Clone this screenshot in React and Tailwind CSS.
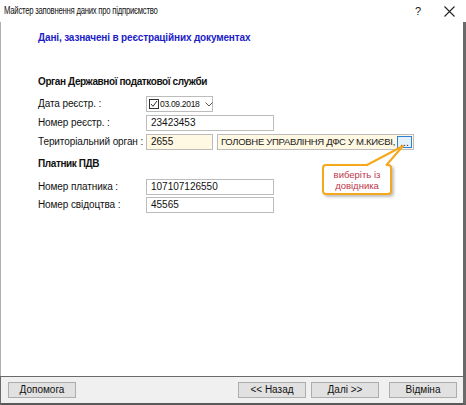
import React from "react";

const F = { fontFamily: '"Liberation Sans", "DejaVu Sans", sans-serif' };

function Row({ label, children }) {
  return (
    <div className="flex items-center h-[16px]">
      <div className="w-[108px] shrink-0 whitespace-nowrap text-[10px] tracking-[-0.1px] text-[#111] leading-none">{label}</div>
      {children}
    </div>
  );
}

function Box({ w, value, bg = "bg-white" }) {
  return (
    <div className={`h-[16px] ${w} ${bg} shrink-0 border border-[#bcbcbc] flex items-center pl-[4px] text-[10px] text-[#111] leading-none`}>
      {value}
    </div>
  );
}

function Btn({ children }) {
  return (
    <div className="w-[68px] h-[16px] shrink-0 bg-[#e1e1e1] border border-[#adadad] flex items-center justify-center text-[10px] text-[#111] leading-none">
      {children}
    </div>
  );
}

export default function App() {
  return (
    <div className="relative w-[466px] h-[405px] bg-white overflow-hidden" style={F}>
      {/* title bar */}
      <div className="h-[22px] flex items-center pl-[4px] pr-[8px] text-[10px] text-[#111] leading-none">
        <div className="flex-1 min-w-0">
          <span className="inline-block whitespace-nowrap tracking-[-0.3px] scale-x-[0.77] origin-left">Майстер заповнення даних про підприємство</span>
        </div>
        <span className="w-[30px] text-center text-[11px] mr-[11px]">?</span>
        <svg width="11" height="11" viewBox="0 0 11 11" className="mr-[3px]">
          <path d="M0.5 0.5 L10.5 10.5 M10.5 0.5 L0.5 10.5" stroke="#222" strokeWidth="1.1" />
        </svg>
      </div>
      {/* body */}
      <div className="h-[354px] border-l border-l-[#b0b0b0] border-r-[3px] border-r-[#6a6a6a] pl-[37px] pt-[10px]">
        <div className="text-[10px] font-bold text-[#1c1cc8] tracking-[-0.15px] leading-none h-[12px] flex items-center whitespace-nowrap">
          Дані, зазначені в реєстраційних документах
        </div>
        <div className="mt-[32px] text-[10px] font-bold text-[#111] tracking-[-0.4px] leading-none h-[12px] flex items-center whitespace-nowrap">
          Орган Державної податкової служби
        </div>
        <div className="mt-[8px] flex flex-col gap-[3px]">
          <Row label="Дата реєстр. :">
            <div className="h-[16px] w-[67px] shrink-0 border border-[#bcbcbc] bg-white flex items-center pl-[2px] text-[8.5px] tracking-[-0.3px] text-[#111] leading-none">
              <svg width="10" height="10" viewBox="0 0 10 10" className="shrink-0 mr-[1px]">
                <rect x="0.5" y="0.5" width="9" height="9" fill="white" stroke="#333" />
                <path d="M2 5 L4 7.3 L8 2" fill="none" stroke="#333" strokeWidth="1" />
              </svg>
              <span className="whitespace-nowrap">03.09.2018</span>
              <svg width="8" height="5" viewBox="0 0 8 5" className="shrink-0 ml-[5px]">
                <path d="M0.5 0.5 L4 4 L7.5 0.5" fill="none" stroke="#555" strokeWidth="1" />
              </svg>
            </div>
          </Row>
          <Row label="Номер реєстр. :">
            <Box w="w-[128px]" value="23423453" />
          </Row>
          <Row label="Територіальний орган :">
            <Box w="w-[67px]" value="2655" bg="bg-[#fff8e3]" />
            <div className="ml-[4px] h-[16px] w-[197px] shrink-0 bg-[#fff8e3] border border-[#bcbcbc] flex items-center pl-[3px] text-[9.5px] tracking-[-0.3px] font-normal text-[#222] leading-none">
              <span className="flex-1 min-w-0 whitespace-nowrap overflow-hidden">ГОЛОВНЕ УПРАВЛІННЯ ДФС У М.КИЄВІ,</span>
              <div className="w-[15px] h-[12px] mr-[1px] shrink-0 border border-[#2f7fd8] bg-[#e5f1fb] flex items-end justify-center text-[10px] tracking-normal leading-[8px] text-[#111]">...</div>
            </div>
          </Row>
        </div>
        <div className="mt-[8px] text-[10px] font-bold text-[#111] tracking-[-0.4px] leading-none h-[12px] flex items-center whitespace-nowrap">
          Платник ПДВ
        </div>
        <div className="mt-[9px] flex flex-col gap-[2px]">
          <Row label="Номер платника :">
            <Box w="w-[128px]" value="107107126550" />
          </Row>
          <Row label="Номер свідоцтва :">
            <Box w="w-[128px]" value="45565" />
          </Row>
        </div>
      </div>
      {/* button bar */}
      <div className="h-[29px] bg-[#f0f0f0] border-t border-t-[#6a6a6a] border-b-[2px] border-b-[#5a5a5a] border-l border-l-[#6a6a6a] border-r-[3px] border-r-[#6a6a6a] flex items-center pl-[7px] pr-[6px]">
        <Btn>Допомога</Btn>
        <div className="flex-1" />
        <Btn>&lt;&lt; Назад</Btn>
        <div className="w-[5px]" />
        <Btn>Далі &gt;&gt;</Btn>
        <div className="w-[10px]" />
        <Btn>Відміна</Btn>
      </div>
      {/* callout */}
      <div className="absolute left-[322px] top-[164px] w-[70px] h-[31px] rounded-[4px] border-2 border-[#f5a81c] bg-white shadow-[2px_2px_3px_rgba(0,0,0,0.25)] flex items-center justify-center text-center text-[9.5px] leading-[11px] text-[#c0364a]">
        виберіть із<br />довідника
      </div>
      <svg className="absolute left-[350px] top-[140px]" width="60" height="30" viewBox="0 0 60 30">
        <path d="M16 26 L53 6 L36 26 Z" fill="white" stroke="none" />
        <path d="M16 25.5 L53 6 L36 25.5" fill="none" stroke="#f5a81c" strokeWidth="2" strokeLinejoin="round" />
      </svg>
    </div>
  );
}
